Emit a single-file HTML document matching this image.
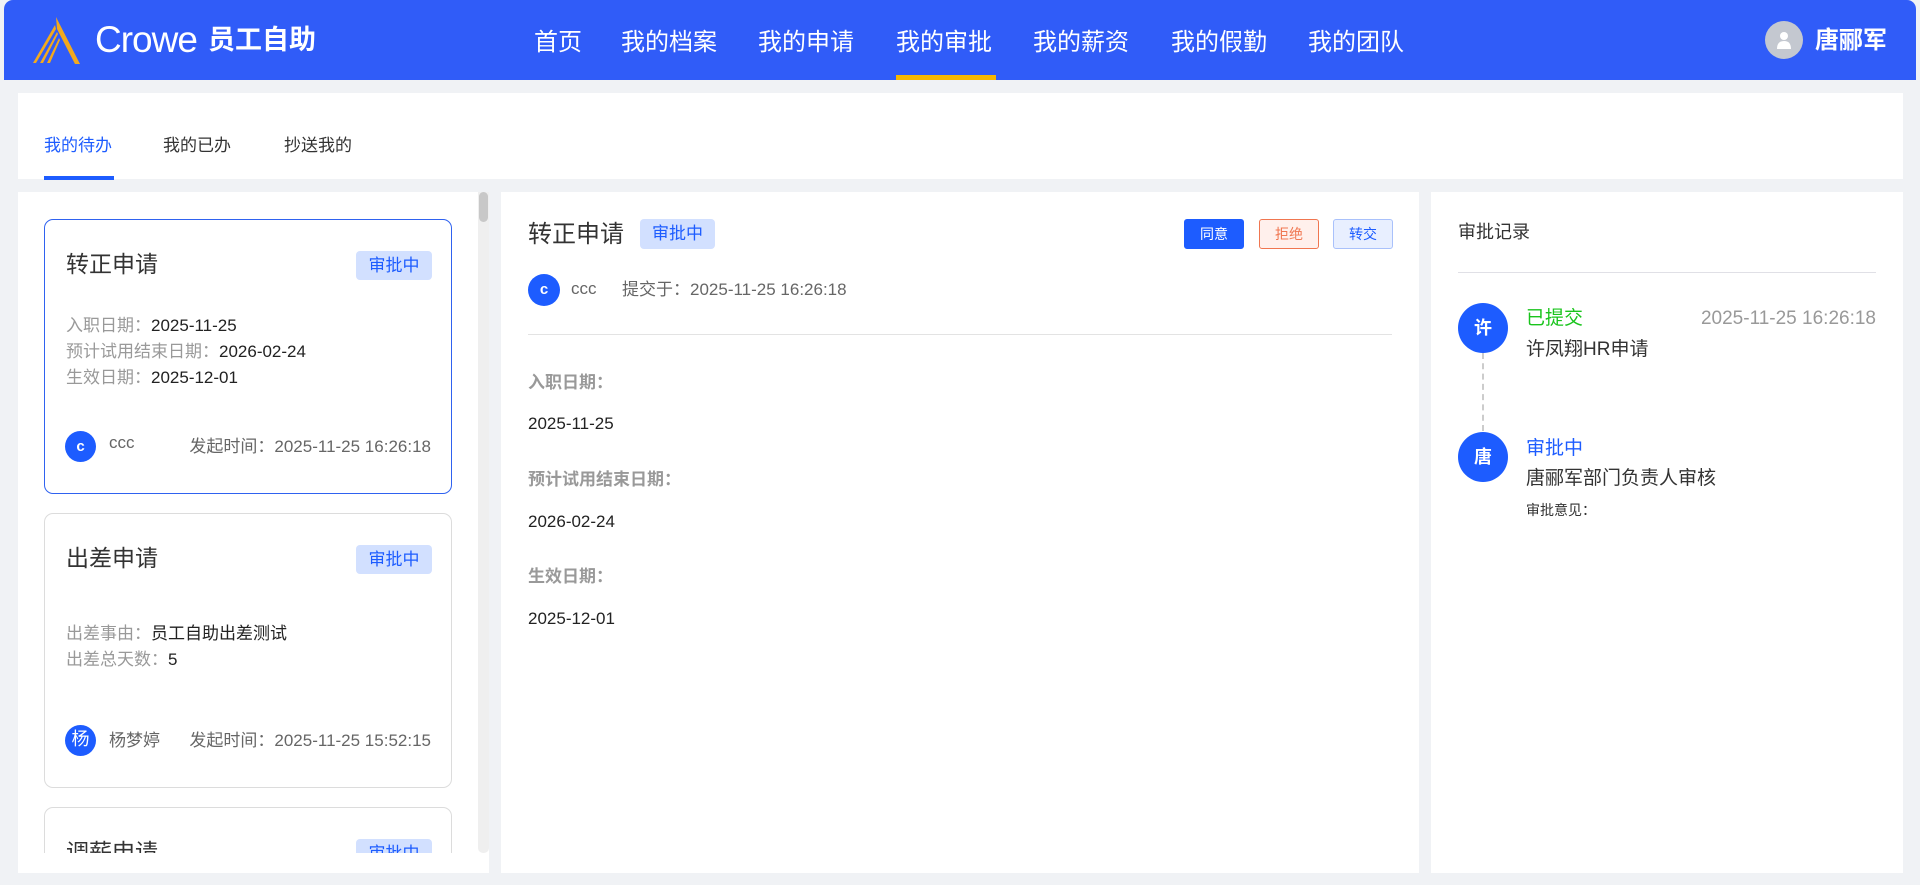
<!DOCTYPE html>
<html><head><meta charset="utf-8"><style>
*{box-sizing:border-box;margin:0;padding:0}
html{overflow:hidden;height:885px}
body{width:1920px;height:885px;background:#f0f2f5;font-family:"Liberation Sans","Noto Sans CJK SC",sans-serif;position:relative;overflow:hidden;color:#333}
.abs{position:absolute}
.hdr{left:4px;top:0;width:1912px;height:80px;background:#305cf8;border-radius:9px 9px 0 0}
.nav{top:22px;font-size:24px;color:#fff;white-space:nowrap}
.panel{background:#fff}
.tag{background:#d2e0ff;color:#1d5cff;border-radius:4px;font-size:17px;text-align:center}
.card{left:44px;width:408px;height:275px;border:1px solid #dcdcdc;border-radius:9px;background:#fff}
.card .t{left:21px;top:25px;font-size:23px;color:#333}
.card .tag{left:311px;top:31px;width:76px;height:29px;line-height:29px}
.card .f{left:21px;font-size:17px;color:#999}
.card .f b{font-weight:normal;color:#222}
.av{border-radius:50%;background:#1d5cff;color:#fff;text-align:center;font-weight:bold}
.card .av{left:20px;width:31px;height:31px;line-height:31px;font-size:15px}
.card .nm{left:64px;font-size:17px;color:#666}
.card .tm{right:20px;font-size:17px;color:#666}
.lbl{left:528px;font-size:17px;color:#999;font-weight:bold}
.val{left:528px;font-size:17px;color:#222}
.btn{top:219px;width:60px;height:30px;line-height:28px;border-radius:3px;font-size:14px;text-align:center;border:1px solid}
</style></head><body>
<div class="abs hdr"></div>
<svg class="abs" style="left:28px;top:15px" width="56" height="50" viewBox="0 0 56 50"><path d="M28 2 L52 49 L47 49 L29 14 Z" fill="#f2a91e"/><path d="M27 10 L5 48 L8 48 L28 14Z M29 17 L12 48 L15 48 L30 19Z M31 23 L19 48 L22 48 L32 25Z" fill="#f2a91e"/></svg>
<div class="abs" style="left:95px;top:19px;font-size:37px;color:#fff;letter-spacing:-1px">Crowe</div>
<div class="abs" style="left:208px;top:18px;font-size:27px;color:#fff;font-weight:bold">员工自助</div>
<div class="abs nav" style="left:534px">首页</div>
<div class="abs nav" style="left:621px">我的档案</div>
<div class="abs nav" style="left:758px">我的申请</div>
<div class="abs nav" style="left:896px">我的审批</div>
<div class="abs nav" style="left:1033px">我的薪资</div>
<div class="abs nav" style="left:1171px">我的假勤</div>
<div class="abs nav" style="left:1308px">我的团队</div>
<div class="abs" style="left:896px;top:75px;width:100px;height:5px;background:#f6b700"></div>
<div class="abs" style="left:1765px;top:21px;width:38px;height:38px;border-radius:50%;background:#c4c8d0"></div>
<svg class="abs" style="left:1775px;top:30px" width="18" height="20" viewBox="0 0 18 20"><circle cx="9" cy="6" r="4" fill="#fff"/><path d="M2 19 Q2 11 9 11 Q16 11 16 19Z" fill="#fff"/></svg>
<div class="abs" style="left:1815px;top:20px;font-size:24px;color:#fff;font-weight:bold">唐郦军</div>

<div class="abs panel" style="left:18px;top:93px;width:1885px;height:86px"></div>
<div class="abs" style="left:44px;top:131px;font-size:17px;color:#1d5cff">我的待办</div>
<div class="abs" style="left:163px;top:131px;font-size:17px;color:#333">我的已办</div>
<div class="abs" style="left:284px;top:131px;font-size:17px;color:#333">抄送我的</div>
<div class="abs" style="left:44px;top:176px;width:70px;height:4px;background:#1d5cff"></div>

<div class="abs panel" style="left:18px;top:192px;width:471px;height:681px;overflow:hidden">
 <div class="abs" style="left:0;top:0;width:460px;height:661px;overflow:hidden">
  <div class="abs card" style="top:27px;border-color:#2f62f0;left:26px">
   <div class="abs t">转正申请</div><div class="abs tag">审批中</div>
   <div class="abs f" style="top:91px">入职日期：<b>2025-11-25</b></div>
   <div class="abs f" style="top:117px">预计试用结束日期：<b>2026-02-24</b></div>
   <div class="abs f" style="top:143px">生效日期：<b>2025-12-01</b></div>
   <div class="abs av" style="top:211px">c</div><div class="abs nm" style="top:213px">ccc</div>
   <div class="abs tm" style="top:212px">发起时间：2025-11-25 16:26:18</div>
  </div>
  <div class="abs card" style="top:321px;left:26px">
   <div class="abs t">出差申请</div><div class="abs tag">审批中</div>
   <div class="abs f" style="top:105px">出差事由：<b>员工自助出差测试</b></div>
   <div class="abs f" style="top:131px">出差总天数：<b>5</b></div>
   <div class="abs av" style="top:211px;font-weight:normal;font-size:18px;line-height:29px">杨</div><div class="abs nm" style="top:212px">杨梦婷</div>
   <div class="abs tm" style="top:212px">发起时间：2025-11-25 15:52:15</div>
  </div>
  <div class="abs card" style="top:615px;left:26px">
   <div class="abs t">调薪申请</div><div class="abs tag">审批中</div>
  </div>
 </div>
 <div class="abs" style="left:460px;top:0;width:11px;height:661px;background:#efefef;border-radius:0 0 5px 5px"></div>
 <div class="abs" style="left:461px;top:0;width:9px;height:30px;background:#c8c8c8;border-radius:5px"></div>
</div>

<div class="abs panel" style="left:501px;top:192px;width:918px;height:681px"></div>
<div class="abs" style="left:528px;top:214px;font-size:24px;color:#333">转正申请</div>
<div class="abs tag" style="left:640px;top:219px;width:75px;height:30px;line-height:30px">审批中</div>
<div class="abs btn" style="left:1184px;background:#1d5cff;border-color:#1d5cff;color:#fff">同意</div>
<div class="abs btn" style="left:1259px;background:#fff0ec;border-color:#f07650;color:#f07650">拒绝</div>
<div class="abs btn" style="left:1333px;background:#e8efff;border-color:#a9c1fb;color:#1d5cff">转交</div>
<div class="abs av" style="left:528px;top:274px;width:32px;height:32px;line-height:32px;font-size:15px">c</div>
<div class="abs" style="left:571px;top:279px;font-size:17px;color:#666">ccc</div>
<div class="abs" style="left:622px;top:275px;font-size:17px;color:#666">提交于：2025-11-25 16:26:18</div>
<div class="abs" style="left:528px;top:334px;width:864px;height:1px;background:#e3e3e3"></div>
<div class="abs lbl" style="top:368px">入职日期：</div>
<div class="abs val" style="top:414px">2025-11-25</div>
<div class="abs lbl" style="top:465px">预计试用结束日期：</div>
<div class="abs val" style="top:512px">2026-02-24</div>
<div class="abs lbl" style="top:562px">生效日期：</div>
<div class="abs val" style="top:609px">2025-12-01</div>

<div class="abs panel" style="left:1431px;top:192px;width:472px;height:681px"></div>
<div class="abs" style="left:1458px;top:218px;font-size:18px;color:#333">审批记录</div>
<div class="abs" style="left:1458px;top:272px;width:418px;height:1px;background:#e0e0e6"></div>
<div class="abs" style="left:1482px;top:353px;width:0;height:78px;border-left:2px dashed #ccc"></div>
<div class="abs av" style="left:1458px;top:303px;width:50px;height:50px;line-height:50px;font-size:18px">许</div>
<div class="abs av" style="left:1458px;top:432px;width:50px;height:50px;line-height:50px;font-size:18px">唐</div>
<div class="abs" style="left:1526px;top:303px;font-size:19px;color:#19c41c">已提交</div>
<div class="abs" style="right:44px;top:308px;font-size:19px;color:#999">2025-11-25 16:26:18</div>
<div class="abs" style="left:1526px;top:334px;font-size:19px;color:#333">许凤翔HR申请</div>
<div class="abs" style="left:1526px;top:433px;font-size:19px;color:#1d5cff">审批中</div>
<div class="abs" style="left:1526px;top:463px;font-size:19px;color:#333">唐郦军部门负责人审核</div>
<div class="abs" style="left:1526px;top:500px;font-size:14px;color:#333">审批意见：</div>
</body></html>
